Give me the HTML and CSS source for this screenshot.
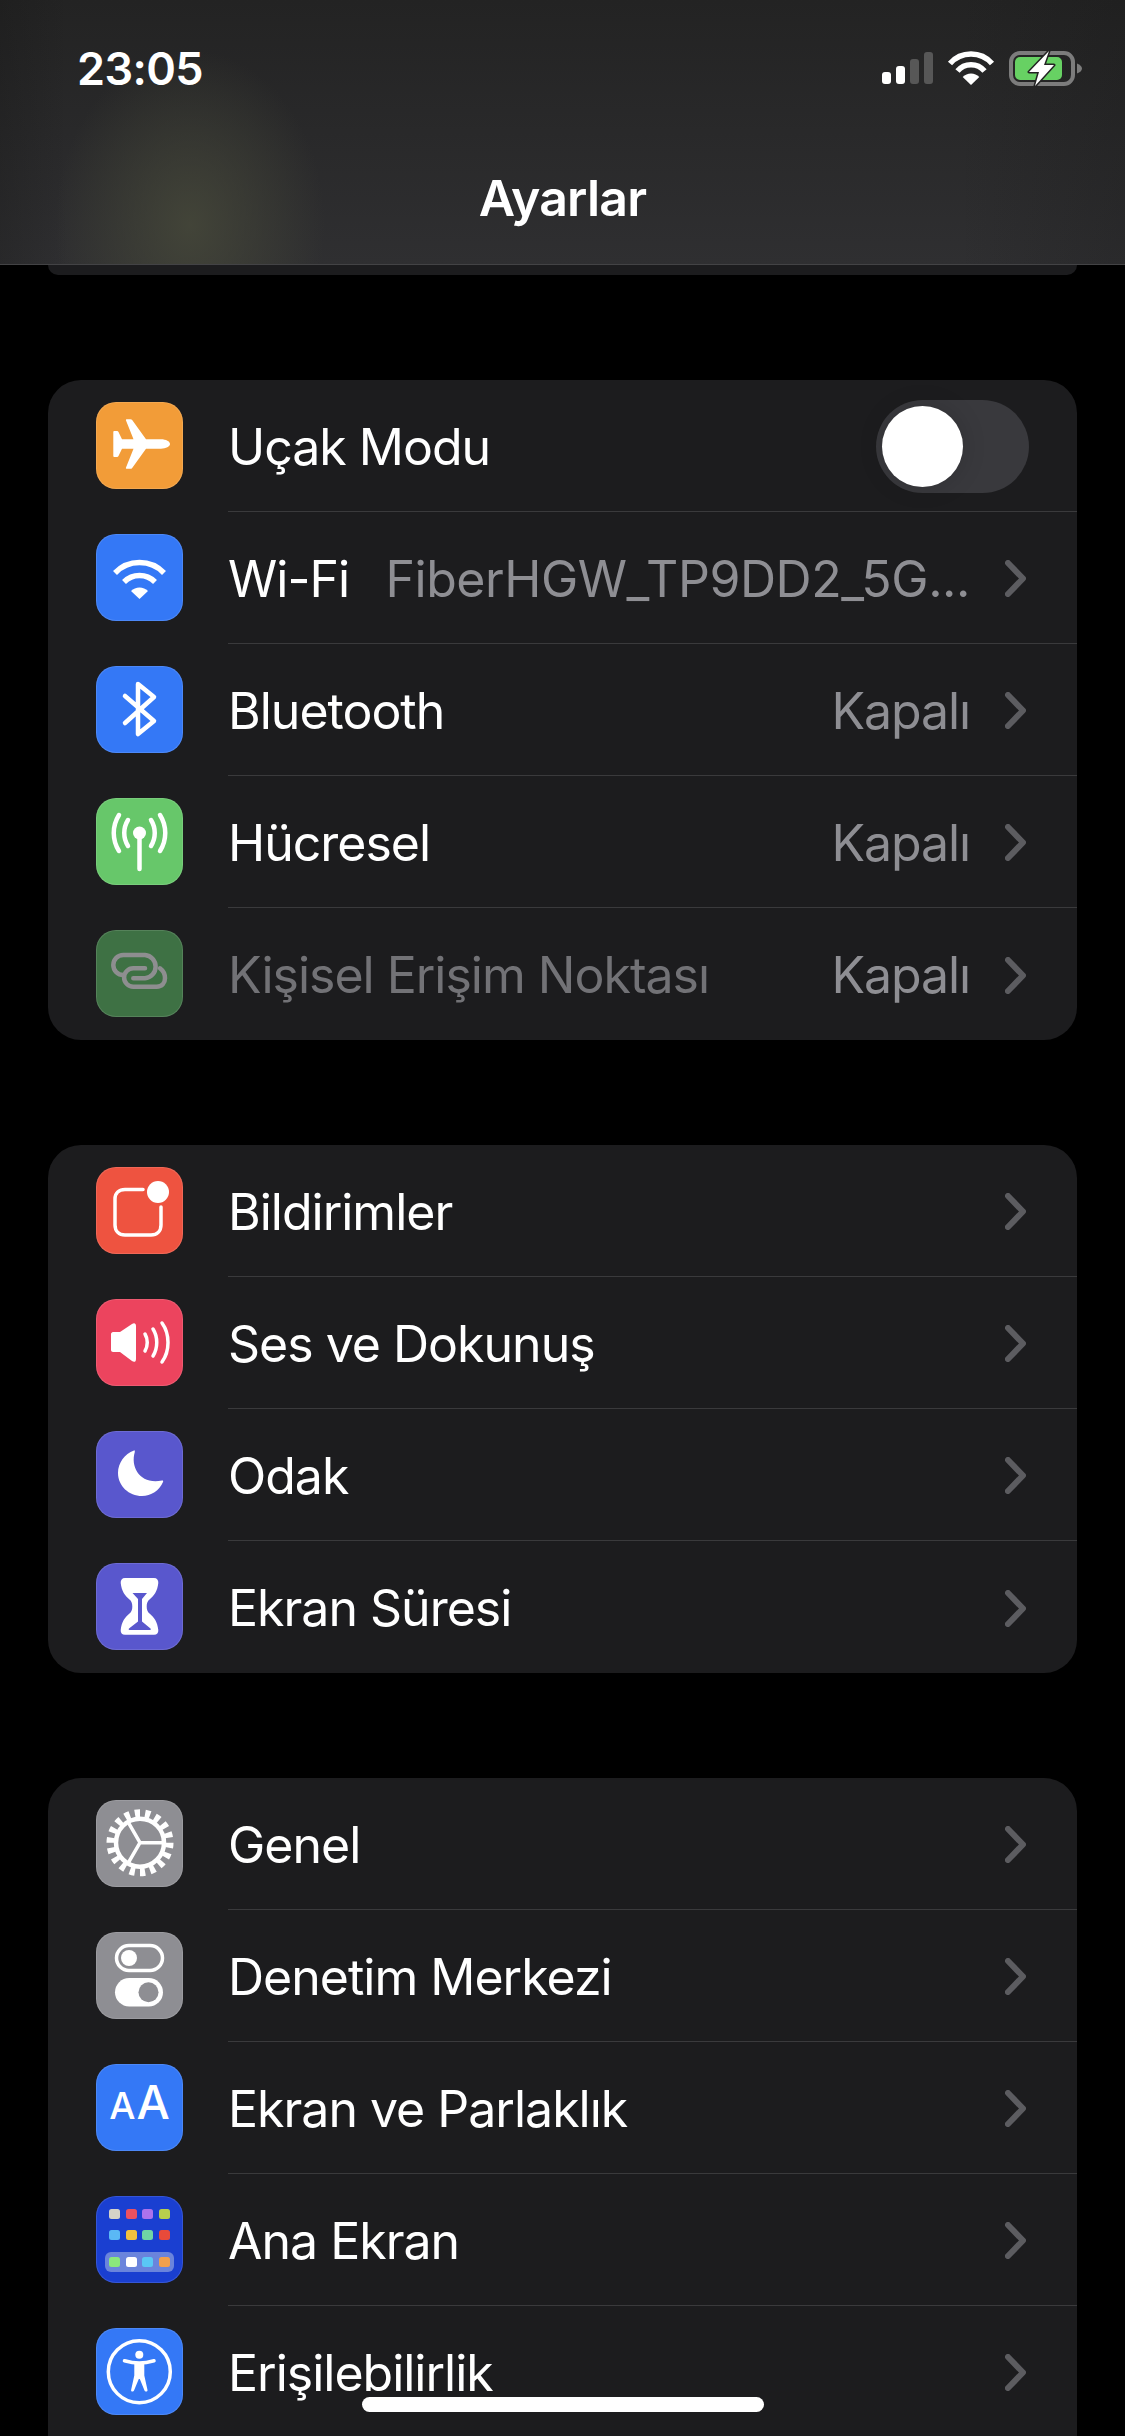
FILE: index.html
```html
<!DOCTYPE html>
<html lang="tr">
<head>
<meta charset="utf-8">
<title>Ayarlar</title>
<link rel="stylesheet" href="styles.css">
</head>
<body>
<div class="screen">
  <header class="nav">
    <div class="status">
      <span class="time">23:05</span>
      <svg class="status-icons" width="200" height="36" viewBox="0 0 200 36">
        <rect x="0" y="21" width="9" height="12" rx="3" fill="#fff"/>
        <rect x="14" y="15" width="9" height="18" rx="3" fill="#fff"/>
        <rect x="28" y="8" width="9" height="25" rx="3" fill="#575757"/>
        <rect x="42" y="1" width="9" height="32" rx="3" fill="#575757"/>
        <g fill="none" stroke="#fff" stroke-width="5.5">
          <path d="M68 12.5A28 28 0 0 1 110 12.5"/>
          <path d="M75.5 20A17.5 17.5 0 0 1 102.500 20"/>
        </g>
        <path d="M89 34L80.700 26A11.500 11.500 0 0 1 97.300 26Z" fill="#fff"/>
        <rect x="129" y="2" width="62" height="31" rx="9" fill="none" stroke="#7c7c7c" stroke-width="4"/>
        <rect x="133" y="6" width="47" height="23" rx="5" fill="#67d163"/>
        <path d="M195 12.500C198 13.500 200 15.500 200 17.500C200 19.500 198 21.500 195 22.500Z" fill="#7c7c7c"/>
        <path d="M167 0L147 21H157L153 35L172 14H162Z" fill="#fff" stroke="#232323" stroke-width="3" stroke-linejoin="round" paint-order="stroke"/>
      </svg>
    </div>
    <h1 class="title">Ayarlar</h1>
  </header>
  <div class="card card-stub"></div>

  <section class="card">
    <div class="row">
      <span class="icon orange">
        <svg viewBox="0 0 87 87"><path class="w" d="M74 42C74 39.500 70 37.300 65 37.300H50L36 17.800C35.700 17.400 35 17.200 34.500 17.200H30.800C30 17.200 29.700 17.800 30 18.500L37.500 37.300H26L22.500 30C22.200 29.400 21.700 29 21 29H18.500C17.700 29 17.300 29.500 17.300 30.300V53.700C17.300 54.500 17.700 55 18.500 55H21C21.700 55 22.200 54.600 22.500 54L26 46.700H37.500L30 65.500C29.700 66.200 30 66.800 30.800 66.800H34.500C35 66.800 35.700 66.600 36 66.200L50 46.700H65C70 46.700 74 44.500 74 42Z"/></svg>
      </span>
      <div class="body">
        <span class="label">Uçak Modu</span>
        <span class="switch"><span class="knob"></span></span>
      </div>
    </div>
    <div class="row">
      <span class="icon blue">
        <svg viewBox="0 0 87 87"><g class="s s5"><path d="M19 39A34 34 0 0 1 68 39"/><path d="M28 48A22 22 0 0 1 59 48"/></g><path class="w" d="M43.500 65L35 57A12 12 0 0 1 52 57Z"/></svg>
      </span>
      <div class="body">
        <span class="label">Wi-Fi</span>
        <span class="value value-long">FiberHGW_TP9DD2_5G...</span>
        <svg class="chev" viewBox="0 0 21 37"><path d="M3 3L18 18.500L3 34"/></svg>
      </div>
    </div>
    <div class="row">
      <span class="icon blue">
        <svg viewBox="0 0 87 87"><path class="s s4" stroke-linejoin="round" d="M29 30L58 55L42 68V18L58 31L29 57"/></svg>
      </span>
      <div class="body">
        <span class="label">Bluetooth</span>
        <span class="value">Kapalı</span>
        <svg class="chev" viewBox="0 0 21 37"><path d="M3 3L18 18.500L3 34"/></svg>
      </div>
    </div>
    <div class="row">
      <span class="icon green">
        <svg viewBox="0 0 87 87"><circle class="w" cx="43.500" cy="35" r="6.500"/><path class="s s4" d="M43.500 37V71M32 22C27 30 27 40 32 48M55 22C60 30 60 40 55 48M23 17C16 28 16 42 23 53M64 17C71 28 71 42 64 53"/></svg>
      </span>
      <div class="body">
        <span class="label">Hücresel</span>
        <span class="value">Kapalı</span>
        <svg class="chev" viewBox="0 0 21 37"><path d="M3 3L18 18.500L3 34"/></svg>
      </div>
    </div>
    <div class="row">
      <span class="icon dim-green">
        <svg viewBox="0 0 87 87"><g class="s link"><path d="M27.300 45A10 10 0 0 1 27.300 25H49A11.700 11.700 0 0 1 49 48.300H37.300"/><path d="M49 38.300H37.300A9.200 9.200 0 0 0 37.300 56.700H60.700C66 56.700 69 53 69 48.300C69 44 67 40.500 64 38.300"/></g></svg>
      </span>
      <div class="body">
        <span class="label dim">Kişisel Erişim Noktası</span>
        <span class="value">Kapalı</span>
        <svg class="chev" viewBox="0 0 21 37"><path d="M3 3L18 18.500L3 34"/></svg>
      </div>
    </div>
  </section>

  <section class="card">
    <div class="row">
      <span class="icon red">
        <svg viewBox="0 0 87 87"><path class="s s3" d="M47 22.500H29C23 22.500 19 26 19 32V58C19 64 23 68 29 68H55C61 68 65 64 65 58V40"/><circle class="w" cx="62" cy="25" r="11"/></svg>
      </span>
      <div class="body">
        <span class="label">Bildirimler</span>
        <svg class="chev" viewBox="0 0 21 37"><path d="M3 3L18 18.500L3 34"/></svg>
      </div>
    </div>
    <div class="row">
      <span class="icon pink">
        <svg viewBox="0 0 87 87"><path class="w" d="M15 35C15 34 16 33 17 33H24L36 25C38 23.500 40 24 40 27V60C40 63 38 63.500 36 62L24 53H17C16 53 15 52 15 51Z"/><path class="s s3" d="M49 35C52 40 52 47 49 52M57 30C62 38 62 49 57 57M66 24C74 35 74 52 66 63"/></svg>
      </span>
      <div class="body">
        <span class="label">Ses ve Dokunuş</span>
        <svg class="chev" viewBox="0 0 21 37"><path d="M3 3L18 18.500L3 34"/></svg>
      </div>
    </div>
    <div class="row">
      <span class="icon indigo">
        <svg viewBox="0 0 87 87"><path class="w" d="M38 19.500C38.500 19 39 20 38.800 21C34 37 45 54 66 49.500C67 49.300 67.500 50 67 51C63.500 59.500 55 65 46 65C33 65 22 55 22 42C22 32 28.500 23 38 19.500Z"/></svg>
      </span>
      <div class="body">
        <span class="label">Odak</span>
        <svg class="chev" viewBox="0 0 21 37"><path d="M3 3L18 18.500L3 34"/></svg>
      </div>
    </div>
    <div class="row">
      <span class="icon indigo">
        <svg viewBox="0 0 87 87"><path class="w" d="M29 15H58C61 15 62.500 17 62.300 20C61.500 28 58 33 53.500 36.500C51.500 38 50.700 40.500 50.700 43.500C50.700 46.500 51.500 49 53.500 50.500C58 54 61.500 59 62.300 67C62.500 70 61 71.700 58 71.700H29C26 71.700 24.500 70 24.700 67C25.500 59 29 54 33.500 50.500C35.500 49 36.300 46.500 36.300 43.500C36.300 40.500 35.500 38 33.500 36.500C29 33 25.500 28 24.700 20C24.500 17 26 15 29 15Z"/><path class="hg" d="M36.500 30H51L46 36V58.500L54.500 65.500C55 66 55 67 54 67H33.500C32.500 67 32.500 66 33 65.500L42 58.500V36Z"/></svg>
      </span>
      <div class="body">
        <span class="label">Ekran Süresi</span>
        <svg class="chev" viewBox="0 0 21 37"><path d="M3 3L18 18.500L3 34"/></svg>
      </div>
    </div>
  </section>

  <section class="card">
    <div class="row">
      <span class="icon gray">
        <svg viewBox="0 0 87 87"><circle class="teeth" cx="44" cy="42.700" r="29.500" pathLength="18"/><circle class="s s4" cx="44" cy="42.700" r="24"/><path class="s s3" d="M44 42.700H66M44 42.700L33 23.700M44 42.700L33 61.700"/></svg>
      </span>
      <div class="body">
        <span class="label">Genel</span>
        <svg class="chev" viewBox="0 0 21 37"><path d="M3 3L18 18.500L3 34"/></svg>
      </div>
    </div>
    <div class="row">
      <span class="icon gray">
        <svg viewBox="0 0 87 87"><rect class="s s3" x="20.500" y="13.500" width="46" height="25" rx="12.500"/><circle class="w" cx="33" cy="26" r="8"/><rect class="w" x="19" y="46" width="48" height="28.500" rx="14.250"/><circle class="gray-fill" cx="52.500" cy="60.250" r="10"/></svg>
      </span>
      <div class="body">
        <span class="label">Denetim Merkezi</span>
        <svg class="chev" viewBox="0 0 21 37"><path d="M3 3L18 18.500L3 34"/></svg>
      </div>
    </div>
    <div class="row">
      <span class="icon blue aa"><span class="aa-small">A</span><span class="aa-big">A</span></span>
      <div class="body">
        <span class="label">Ekran ve Parlaklık</span>
        <svg class="chev" viewBox="0 0 21 37"><path d="M3 3L18 18.500L3 34"/></svg>
      </div>
    </div>
    <div class="row">
      <span class="icon deep">
        <svg viewBox="0 0 87 87">
          <rect x="13" y="13" width="11" height="10" rx="2.500" fill="#d5d3c8"/>
          <rect x="30" y="13" width="11" height="10" rx="2.500" fill="#ea5160"/>
          <rect x="46" y="13" width="11" height="10" rx="2.500" fill="#ac72ec"/>
          <rect x="63" y="13" width="11" height="10" rx="2.500" fill="#b7cf4d"/>
          <rect x="13" y="34" width="11" height="10" rx="2.500" fill="#5ab8f5"/>
          <rect x="30" y="34" width="11" height="10" rx="2.500" fill="#f3c03f"/>
          <rect x="46" y="34" width="11" height="10" rx="2.500" fill="#6fd5a5"/>
          <rect x="63" y="34" width="11" height="10" rx="2.500" fill="#e84a3a"/>
          <rect x="9" y="56" width="69" height="20" rx="6" fill="#6a84dc"/>
          <rect x="13" y="61" width="11" height="10" rx="2.500" fill="#8be77c"/>
          <rect x="30" y="61" width="11" height="10" rx="2.500" fill="#ffffff"/>
          <rect x="46" y="61" width="11" height="10" rx="2.500" fill="#5ac8f5"/>
          <rect x="63" y="61" width="11" height="10" rx="2.500" fill="#f2a04c"/>
        </svg>
      </span>
      <div class="body">
        <span class="label">Ana Ekran</span>
        <svg class="chev" viewBox="0 0 21 37"><path d="M3 3L18 18.500L3 34"/></svg>
      </div>
    </div>
    <div class="row">
      <span class="icon blue">
        <svg viewBox="0 0 87 87"><circle class="s s3" cx="43.300" cy="43.700" r="31"/><circle class="w" cx="43.300" cy="26.700" r="4"/><path class="s s3" d="M28.500 32.700C33 34 38 35 43.300 35C48.600 35 53.500 34 58 32.700"/><path class="w" d="M38.300 35H48.300V47.500L51.500 62C51.800 64 49 64 48.500 62.500L43.800 51H42.800L38 62.500C37.500 64 34.800 64 35.100 62L38.300 47.500Z"/></svg>
      </span>
      <div class="body">
        <span class="label">Erişilebilirlik</span>
        <svg class="chev" viewBox="0 0 21 37"><path d="M3 3L18 18.500L3 34"/></svg>
      </div>
    </div>
    <div class="row"></div>
  </section>

  <div class="home-bar"></div>
</div>
</body>
</html>
```
FILE: styles.css
```css
* { box-sizing: border-box; }
html, body { margin: 0; padding: 0; background: #000; }
.screen {
  position: relative;
  width: 1125px;
  height: 2436px;
  overflow: hidden;
  background: #000;
  color: #fff;
  font-family: Inter, "Liberation Sans", sans-serif;
}
.nav {
  height: 265px;
  border-bottom: 1px solid #434345;
  background:
    radial-gradient(ellipse 135px 175px at 190px 225px, rgba(70, 72, 58, .85), rgba(70, 72, 58, 0) 100%),
    linear-gradient(90deg, rgba(20, 20, 20, .25) 0, rgba(20, 20, 20, 0) 6%, rgba(20, 20, 20, 0) 85%, rgba(20, 20, 20, .2) 100%),
    linear-gradient(180deg, #232323 0, #2f2f31 100%);
  display: flex;
  flex-direction: column;
}
.status {
  display: flex;
  justify-content: space-between;
  align-items: center;
  padding: 50px 43px 0 77px;
  height: 87px;
}
.time {
  font-size: 45px;
  font-weight: 600;
  line-height: 36px;
  letter-spacing: -.6px;
}
.status-icons { display: block; }
.title {
  margin: 0;
  padding-top: 80px;
  text-align: center;
  font-size: 50px;
  line-height: 62px;
  font-weight: 600;
  letter-spacing: -.8px;
}
.card {
  margin: 105px 48px 0;
  background: #1c1c1e;
  border-radius: 33px;
  overflow: hidden;
}
.card-stub {
  height: 10px;
  margin-top: 0;
  border-radius: 0 0 33px 33px;
}
.row {
  display: flex;
  height: 132px;
  padding-left: 48px;
  align-items: center;
}
.row:last-child .body { border-bottom: 0; }
.icon {
  flex: none;
  width: 87px;
  height: 87px;
  margin-bottom: 1px;
  border-radius: 20px;
  display: flex;
  align-items: center;
  justify-content: center;
  box-shadow: inset 0 0 0 1px rgba(255, 255, 255, .12);
}
.icon svg { display: block; width: 87px; height: 87px; }
.orange { background: #f29c38; }
.blue { background: #3478f6; }
.green { background: #67c76a; }
.dim-green { background: #3e7144; }
.red { background: #ee5340; }
.pink { background: #ec445e; }
.indigo { background: #5957cd; }
.gray { background: #8e8e93; }
.deep { background: #1a3fd1; }
.w { fill: #fff; }
.s { fill: none; stroke: #fff; stroke-linecap: round; }
.s3 { stroke-width: 3.5px; }
.s4 { stroke-width: 4.5px; }
.s5 { stroke-width: 5.5px; stroke-linecap: butt; }
.link { stroke: #8e8e90; stroke-width: 4.5px; }
.hg { fill: #5957cd; }
.gray-fill { fill: #8e8e93; }
.teeth { fill: none; stroke: #fff; stroke-width: 8px; stroke-dasharray: .5 .5; }
.aa {
  align-items: baseline;
  gap: 1px;
  padding-top: 14px;
  font-weight: 500;
  line-height: 1;
}
.aa-small { font-size: 37px; }
.aa-big { font-size: 47px; }
.body {
  flex: 1;
  min-width: 0;
  align-self: stretch;
  margin-left: 45px;
  padding-top: 2px;
  padding-right: 51px;
  display: flex;
  align-items: center;
  border-bottom: 1px solid #3a3a3c;
}
.label {
  font-size: 50px;
  letter-spacing: -1px;
  white-space: nowrap;
}
.label.dim { color: #727276; }
.value {
  margin-left: auto;
  font-size: 50px;
  letter-spacing: -1.1px;
  color: #8e8e93;
  white-space: nowrap;
}
.value-long { letter-spacing: -.45px; }
.chev {
  flex: none;
  width: 21px;
  height: 37px;
  margin-left: 35px;
  fill: none;
  stroke: #5c5c60;
  stroke-width: 6px;
  stroke-linecap: round;
  stroke-linejoin: round;
}
.label + .chev { margin-left: auto; }
.switch {
  margin-left: auto;
  margin-right: -3px;
  width: 153px;
  height: 93px;
  border-radius: 47px;
  background: #39393d;
  padding: 6px;
  display: flex;
}
.knob {
  width: 81px;
  height: 81px;
  border-radius: 50%;
  background: #fff;
  box-shadow: 0 0 24px rgba(0, 0, 0, .15);
}
.home-bar {
  position: absolute;
  left: 362px;
  bottom: 24px;
  width: 402px;
  height: 15px;
  border-radius: 8px;
  background: #fff;
}
```
